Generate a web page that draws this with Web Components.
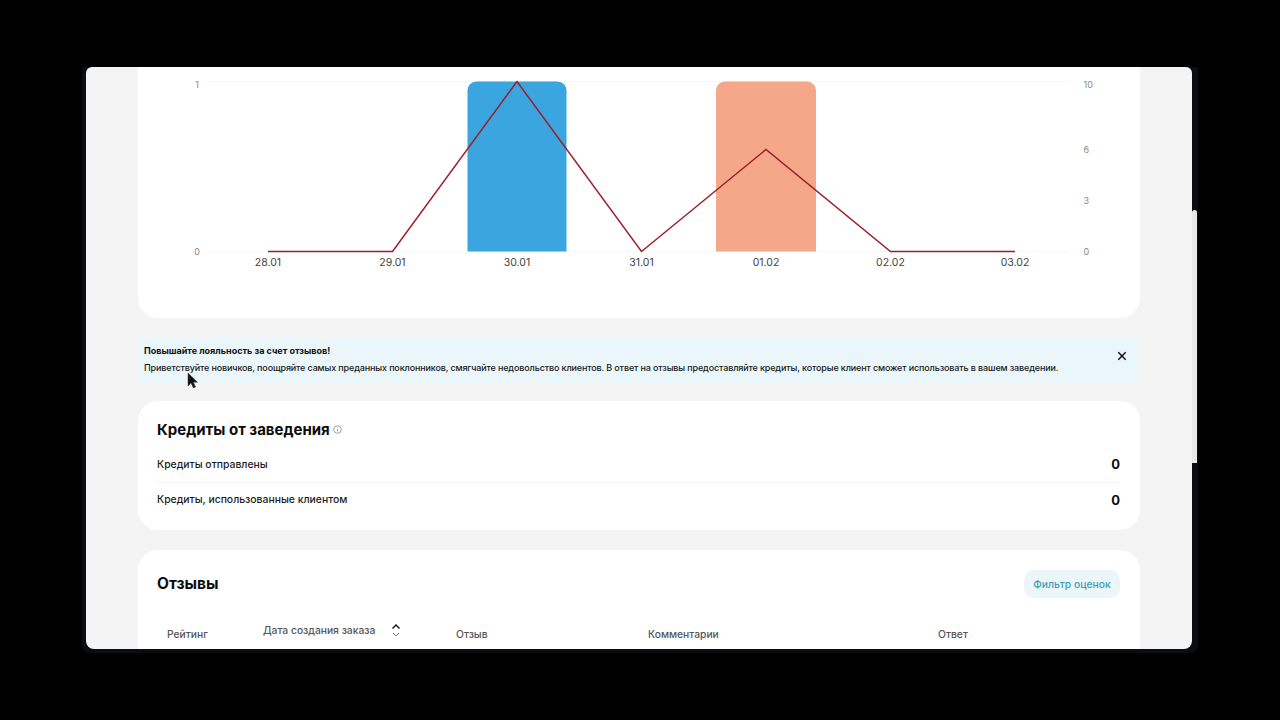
<!DOCTYPE html>
<html lang="ru">
<head>
<meta charset="utf-8">
<title>Отзывы</title>
<style>
  html, body { margin: 0; height: 100%; background: #000; }
  body { font-family: Inter, "Noto Sans", sans-serif; color: #111; overflow: hidden; }
</style>
</head>
<body>
<app-frame>
  <chart-card></chart-card>
  <promo-banner heading="Повышайте лояльность за счет отзывов!">Приветствуйте новичков, поощряйте самых преданных поклонников, смягчайте недовольство клиентов. В ответ на отзывы предоставляйте кредиты, которые клиент сможет использовать в вашем заведении.</promo-banner>
  <credits-card></credits-card>
  <reviews-card></reviews-card>
</app-frame>

<script>
class AppFrame extends HTMLElement {
    constructor() {
        super();
        this.attachShadow({ mode: 'open' });
        this.shadowRoot.innerHTML = `
      <style>
        :host {
          display: block;
          position: relative;
          box-sizing: border-box;
          width: 1116px;
          height: 586px;
          margin: 67px 0 0 82px;
          padding: 0 6px 4px 4px;
          background: #0b0d15;
          border-radius: 0 0 8px 8px;
        }
        .window {
          height: 100%;
          box-sizing: border-box;
          padding: 0 52px 0 52px;
          background: #f4f4f5;
          border-radius: 6px 6px 8px 8px;
          overflow: hidden;
          display: flex;
          flex-direction: column;
        }
        .scrollbar {
          position: absolute;
          left: 1110px;
          top: 143px;
          width: 5px;
          height: 253px;
          background: #e9e9ea;
          border-radius: 3px 3px 0 0;
        }
        .cursor {
          position: absolute;
          left: 105px;
          top: 305px;
          width: 12px;
          height: 17px;
        }
      </style>
      <div class="window"><slot></slot></div>
      <div class="scrollbar"></div>
      <svg class="cursor" viewBox="0 0 12 17"><path d="M1 1v13l3-3 2.4 5 2.2-1-2.3-4.8H10.500z" fill="#111" stroke="#444" stroke-width=".5"/></svg>
    `;
    }
}

class ChartCard extends HTMLElement {
    constructor() {
        super();
        this.attachShadow({ mode: 'open' });
        const days = [[268, '28.01'], [392.5, '29.01'], [517, '30.01'], [641.5, '31.01'], [766, '01.02'], [890.5, '02.02'], [1015, '03.02']];
        const left = [[85, '1'], [252, '0']];
        const right = [[85, '10'], [150, '6'], [201, '3'], [252, '0']];
        const dayLabels = days.map(d => `<text x="${d[0]}" y="266" text-anchor="middle" fill="#444" font-size="10.500">${d[1]}</text>`).join('');
        const leftLabels = left.map(d => `<text x="197" y="${d[0] + 2.5}" text-anchor="middle" fill="#888" font-size="9">${d[1]}</text>`).join('');
        const rightLabels = right.map(d => `<text x="1083.500" y="${d[0] + 2.5}" fill="#888" font-size="9">${d[1]}</text>`).join('');
        this.shadowRoot.innerHTML = `
      <style>
        :host {
          display: block;
          flex: none;
          height: 251px;
          background: #fff;
          border-radius: 0 0 20px 20px;
        }
        svg { display: block; font-family: Inter, "Noto Sans", sans-serif; }
      </style>
      <svg width="1002" height="251" viewBox="138 67 1002 251">
        <line x1="207" y1="81.500" x2="1070" y2="81.500" stroke="#f7f7f7"/>
        <line x1="207" y1="251.500" x2="1070" y2="251.500" stroke="#f7f7f7"/>
        <path d="M467.500 251.500V91a9 9 0 0 1 9-9.500h81a9 9 0 0 1 9 9.500v160.500z" fill="#3aa5de"/>
        <path d="M716 251.500V91a9 9 0 0 1 9-9.500h82a9 9 0 0 1 9 9.500v160.500z" fill="#f5a78a"/>
        <polyline points="268,251.500 392.500,251.500 517,81.500 641.500,251.500 766,149.500 890.500,251.500 1015,251.500" fill="none" stroke="#9c1f2a" stroke-width="1.500" stroke-linejoin="miter"/>
        ${leftLabels}${rightLabels}${dayLabels}
      </svg>
    `;
    }
}

class PromoBanner extends HTMLElement {
    constructor() {
        super();
        this.attachShadow({ mode: 'open' });
        this.shadowRoot.innerHTML = `
      <style>
        :host {
          display: flex;
          flex: none;
          align-items: flex-start;
          justify-content: space-between;
          box-sizing: border-box;
          height: 45px;
          margin-top: 20px;
          padding: 7px 12px 0 6px;
          background: #eaf6fa;
          font-size: 9px;
          color: #1a1a1a;
        }
        .title { font-weight: 700; line-height: 12px; margin-bottom: 5px; color: #111; }
        .text { font-weight: 500; line-height: 12px; white-space: nowrap; letter-spacing: -0.14px; }
        svg { display: block; margin-top: 5px; }
      </style>
      <div>
        <div class="title"></div>
        <div class="text"><slot></slot></div>
      </div>
      <svg width="12" height="12" viewBox="0 0 12 12"><path d="M2.300 2.300l7.400 7.400M9.700 2.300L2.300 9.700" stroke="#111" stroke-width="1.500" fill="none"/></svg>
    `;
        this.shadowRoot.querySelector('.title').textContent = this.getAttribute('heading');
    }
}

class CreditsCard extends HTMLElement {
    constructor() {
        super();
        this.attachShadow({ mode: 'open' });
        this.shadowRoot.innerHTML = `
      <style>
        :host {
          display: block;
          flex: none;
          box-sizing: border-box;
          height: 129px;
          margin-top: 18px;
          padding: 18px 20px 0 19px;
          background: #fff;
          border-radius: 20px;
        }
        h2 {
          display: flex;
          align-items: center;
          gap: 3px;
          margin: 0;
          height: 20px;
          font-size: 15px;
          font-weight: 700;
          color: #0c0c0c;
        }
        .row {
          display: flex;
          align-items: center;
          justify-content: space-between;
          height: 36px;
          font-size: 10.400px;
          font-weight: 500;
          color: #1c1c1c;
        }
        .row + .row { border-top: 1px solid #f4f4f4; height: 33px; }
        .rows { margin-top: 7px; }
        b { font-size: 13px; font-weight: 700; color: #0c0c0c; }
      </style>
      <h2>Кредиты от заведения
        <svg width="9" height="9" viewBox="0 0 9 9"><circle cx="4.500" cy="4.500" r="3.800" fill="none" stroke="#888" stroke-width=".8"/><path d="M4.500 4v2.500M4.500 2.300v.9" stroke="#888" stroke-width=".8"/></svg>
      </h2>
      <div class="rows">
        <div class="row"><span>Кредиты отправлены</span><b>0</b></div>
        <div class="row"><span>Кредиты, использованные клиентом</span><b>0</b></div>
      </div>
    `;
    }
}

class ReviewsCard extends HTMLElement {
    constructor() {
        super();
        this.attachShadow({ mode: 'open' });
        this.shadowRoot.innerHTML = `
      <style>
        :host {
          display: block;
          flex: none;
          box-sizing: border-box;
          height: 120px;
          margin-top: 20px;
          padding: 20px 20px 0 19px;
          background: #fff;
          border-radius: 20px 20px 0 0;
        }
        .top { display: flex; align-items: center; justify-content: space-between; height: 28px; }
        h2 { margin: 0 0 2px; font-size: 15.500px; font-weight: 700; color: #0c0c0c; }
        button {
          font: inherit;
          font-size: 10.300px;
          font-weight: 500;
          width: 96px;
          height: 28px;
          padding: 0;
          border: 0;
          border-radius: 10px;
          background: #eaf6fa;
          color: #3f9db5;
        }
        .head {
          display: grid;
          grid-template-columns: 96px 193px 192px 290px auto;
          margin-top: 29px;
          padding-left: 10px;
          font-size: 10.300px;
          font-weight: 500;
          color: #555;
          line-height: 14px;
        }
        .sort { display: flex; align-items: center; gap: 16px; margin-top: -4px; height: 14px; }
      </style>
      <div class="top">
        <h2>Отзывы</h2>
        <button type="button">Фильтр оценок</button>
      </div>
      <div class="head">
        <span>Рейтинг</span>
        <span class="sort">Дата создания заказа
          <svg width="10" height="15" viewBox="0 0 10 15"><path d="M1.500 5.500L5 2l3.500 3.500" fill="none" stroke="#111" stroke-width="1.400"/><path d="M2 10l3 3 3-3" fill="none" stroke="#777" stroke-width="1"/></svg>
        </span>
        <span>Отзыв</span>
        <span>Комментарии</span>
        <span>Ответ</span>
      </div>
    `;
    }
}

customElements.define('app-frame', AppFrame);
customElements.define('chart-card', ChartCard);
customElements.define('promo-banner', PromoBanner);
customElements.define('credits-card', CreditsCard);
customElements.define('reviews-card', ReviewsCard);
</script>
</body>
</html>
